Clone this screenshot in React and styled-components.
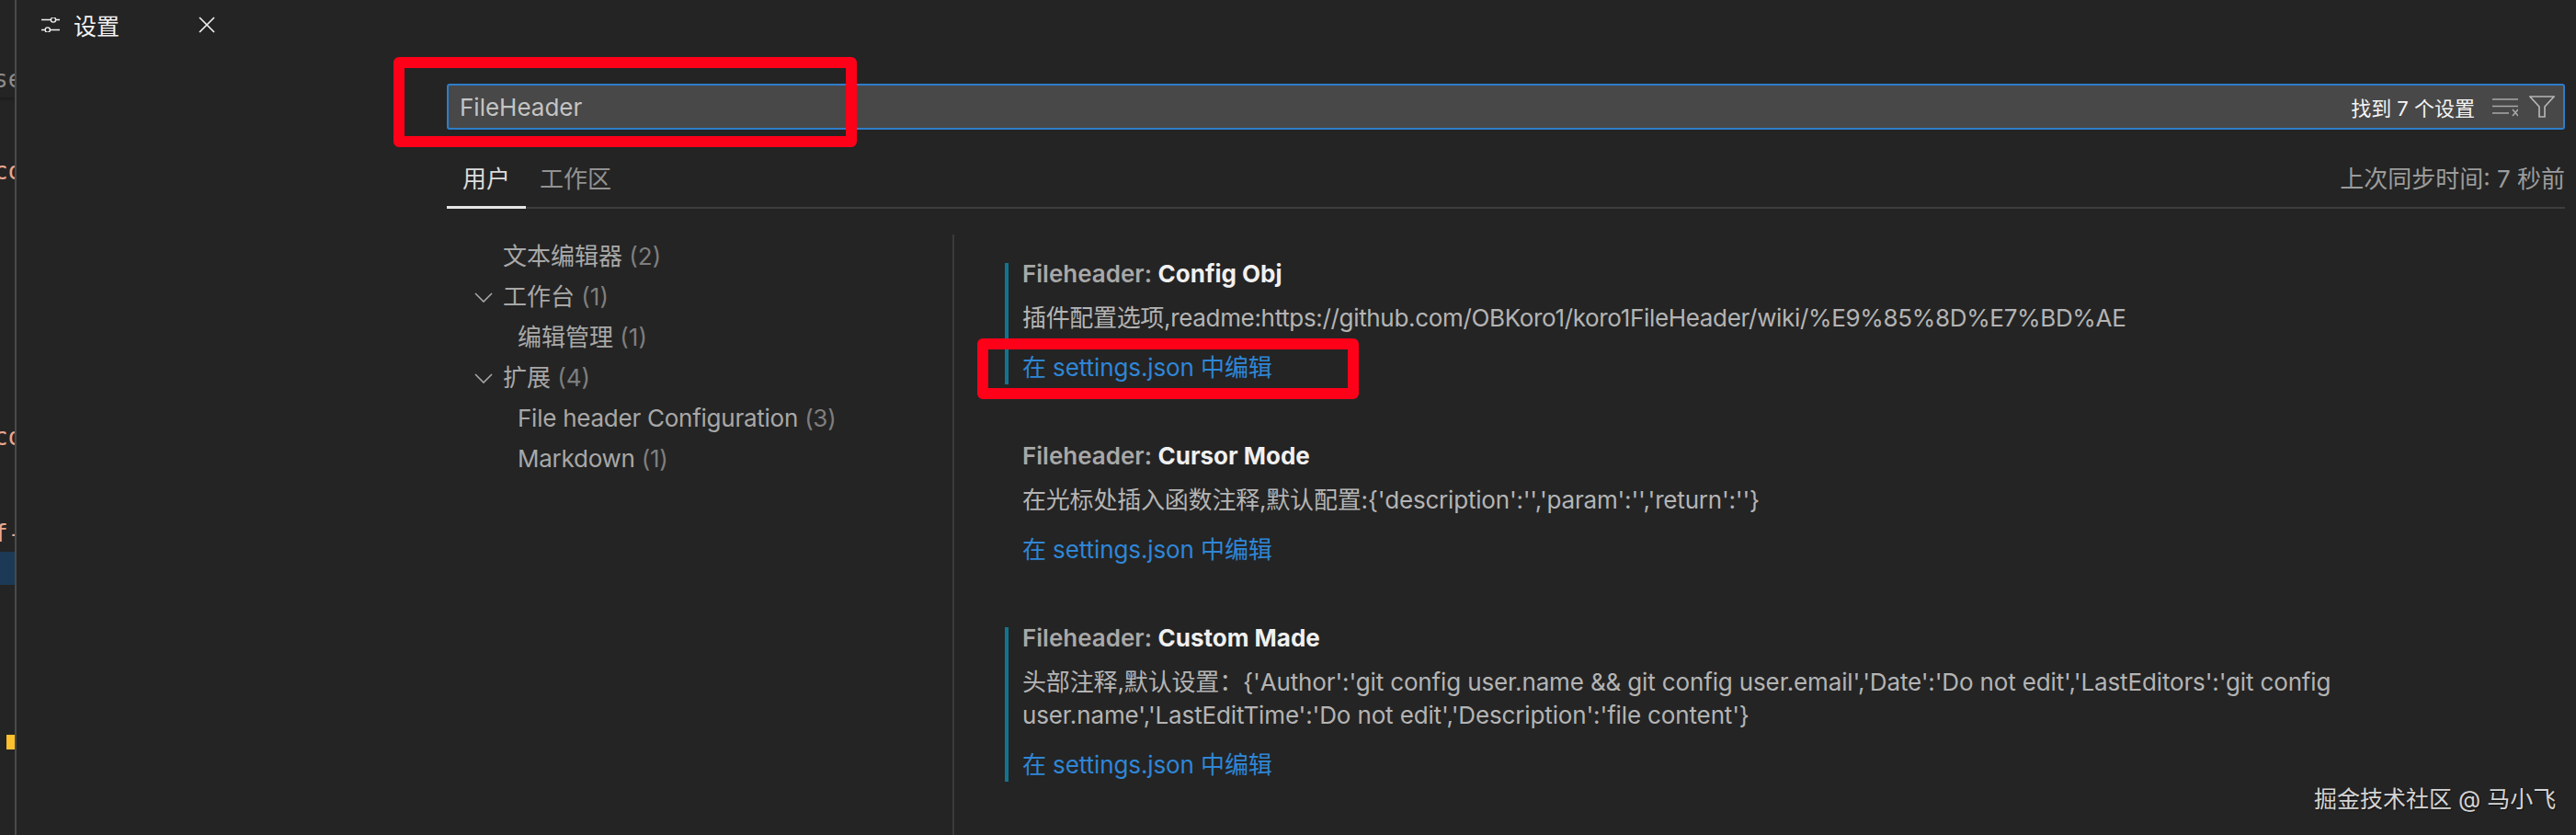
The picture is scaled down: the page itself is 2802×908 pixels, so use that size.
import React from 'react'
import styled, { createGlobalStyle } from 'styled-components'

const sans = `Inter, "Noto Sans CJK SC", sans-serif`

const codeLines = [
  { height: 106, text: 'se', color: '#8c8c8c', rule: true },
  { height: 100, text: 'co', color: '#eaa78e' },
  { height: 289, text: 'co', color: '#eaa78e' },
  { height: 105, text: 'f-', color: '#eaa78e' },
]

const tree = [
  { label: '文本编辑器', count: 2, level: 1 },
  { label: '工作台', count: 1, level: 1, open: true },
  { label: '编辑管理', count: 1, level: 2 },
  { label: '扩展', count: 4, level: 1, open: true },
  { label: 'File header Configuration', count: 3, level: 2, latin: true },
  { label: 'Markdown', count: 1, level: 2, latin: true },
]

const settings = [
  {
    name: 'Config Obj',
    modified: true,
    tracking: -0.33,
    description: '插件配置选项,readme:https://github.com/OBKoro1/koro1FileHeader/wiki/%E9%85%8D%E7%BD%AE',
  },
  {
    name: 'Cursor Mode',
    tracking: -0.2,
    description: "在光标处插入函数注释,默认配置:{'description':'','param':'','return':''}",
  },
  {
    name: 'Custom Made',
    modified: true,
    tracking: -0.14,
    description:
      "头部注释,默认设置：{'Author':'git config user.name && git config user.email','Date':'Do not edit','LastEditors':'git config user.name','LastEditTime':'Do not edit','Description':'file content'}",
  },
]

const App = () => {
  return (
    <Page>
      <GlobalStyle />
      <CodeStrip>
        {codeLines.map((line, i) => (
          <CodeLine key={i} $height={line.height} $color={line.color} $rule={line.rule}>
            {line.text}
          </CodeLine>
        ))}
        <Selection />
        <Marker />
      </CodeStrip>
      <Main>
        <TabHeader>
          <svg width="20" height="16" viewBox="0 0 20 16" fill="none" stroke="#f0f0f0" strokeWidth="1.4">
            <path d="M0 2.5h10.5M16 2.5h4M0 13.5h4M9.5 13.5H20" />
            <circle cx="13" cy="2.5" r="2.6" />
            <circle cx="6.8" cy="13.5" r="2.6" />
          </svg>
          <TabTitle>设置</TabTitle>
          <svg width="18" height="18" viewBox="0 0 18 18" fill="none" stroke="#f0f0f0" strokeWidth="1.7">
            <path d="M1 1l16 16M17 1L1 17" />
          </svg>
        </TabHeader>
        <Body>
          <SearchBox>
            <SearchText>FileHeader</SearchText>
            <ResultCount>找到 7 个设置</ResultCount>
            <SearchAction width="28" height="22" viewBox="0 0 28 22" fill="none" stroke="#a8a8a8" strokeWidth="1.6">
              <path d="M0 3h28M0 10.5h28M0 18h18M22 14l6 7M28 14l-6 7" />
            </SearchAction>
            <SearchAction width="28" height="24" viewBox="0 0 28 24" fill="none" stroke="#b4b4b4" strokeWidth="1.7">
              <path d="M1 1h26L17 12v11h-6V12z" />
            </SearchAction>
          </SearchBox>
          <TabBar>
            <ScopeTab $active>用户</ScopeTab>
            <ScopeTab>工作区</ScopeTab>
            <SyncNote>上次同步时间: 7 秒前</SyncNote>
          </TabBar>
          <Columns>
            <Tree>
              {tree.map((item) => (
                <TreeRow key={item.label} $level={item.level} $latin={item.latin}>
                  {item.open && (
                    <Chevron width="20" height="11" viewBox="0 0 20 11" fill="none" stroke="#a8a8a8" strokeWidth="1.6">
                      <path d="M1 1l9 9 9-9" />
                    </Chevron>
                  )}
                  {item.label} <Count>({item.count})</Count>
                </TreeRow>
              ))}
            </Tree>
            <SettingsList>
              {settings.map((setting) => (
                <Setting key={setting.name} $modified={setting.modified}>
                  <SettingTitle>
                    Fileheader: <strong>{setting.name}</strong>
                  </SettingTitle>
                  <SettingDescription $tracking={setting.tracking}>{setting.description}</SettingDescription>
                  <EditLink>在 settings.json 中编辑</EditLink>
                </Setting>
              ))}
            </SettingsList>
          </Columns>
        </Body>
      </Main>
      <SearchHighlight />
      <LinkHighlight />
      <Watermark>掘金技术社区 @ 马小飞</Watermark>
    </Page>
  )
}

export default App

const GlobalStyle = createGlobalStyle`
  html, body {
    margin: 0;
    background: #242424;
    overflow: hidden;
  }
`

const Page = styled.div`
  position: relative;
  display: flex;
  width: 2802px;
  height: 908px;
  overflow: hidden;
  background: #242424;
  font-family: ${sans};
  font-size: 26px;
`

const CodeStrip = styled.div`
  position: relative;
  width: 16px;
  flex-shrink: 0;
  overflow: hidden;
  border-right: 2px solid #4a4a4a;
`

const CodeLine = styled.div`
  height: ${(p) => p.$height}px;
  display: flex;
  align-items: flex-end;
  margin-left: -7px;
  white-space: nowrap;
  font-family: "DejaVu Sans Mono", monospace;
  font-size: 26px;
  line-height: 40px;
  color: ${(p) => p.$color};
  box-shadow: ${(p) => (p.$rule ? '0 2px 3px #1c1c1c' : 'none')};
`

const Selection = styled.div`
  position: absolute;
  top: 600px;
  left: 0;
  width: 16px;
  height: 36px;
  background: #1c3a56;
`

const Marker = styled.div`
  position: absolute;
  top: 799px;
  left: 7px;
  width: 9px;
  height: 16px;
  background: #fdc02f;
`

const Main = styled.div`
  flex: 1;
  min-width: 0;
  display: flex;
  flex-direction: column;
`

const TabHeader = styled.div`
  height: 54px;
  flex-shrink: 0;
  display: flex;
  align-items: center;
  padding-left: 27px;
`

const TabTitle = styled.div`
  width: 136px;
  margin-left: 15px;
  font-size: 25px;
  color: #f2f2f2;
`

const Body = styled.div`
  flex: 1;
  min-height: 0;
  display: flex;
  flex-direction: column;
  padding: 37px 12px 0 468px;
`

const SearchBox = styled.div`
  box-sizing: border-box;
  height: 50px;
  flex-shrink: 0;
  display: flex;
  align-items: center;
  padding: 0 9px 0 12px;
  background: #484848;
  border: 2px solid #2e7dc9;
  border-radius: 3px;
`

const SearchText = styled.div`
  flex: 1;
  color: #c4c4c4;
`

const ResultCount = styled.div`
  margin-right: 7px;
  font-size: 22px;
  color: #f4f4f4;
`

const SearchAction = styled.svg`
  margin-left: 12px;
  flex-shrink: 0;
`

const TabBar = styled.div`
  height: 86px;
  flex-shrink: 0;
  box-sizing: border-box;
  display: flex;
  align-items: flex-end;
  border-bottom: 2px solid #3e3e3e;
`

const ScopeTab = styled.div`
  box-sizing: border-box;
  height: 54px;
  padding: 0 ${(p) => (p.$active ? 17 : 15)}px;
  line-height: 44px;
  color: ${(p) => (p.$active ? '#dcdcdc' : '#929292')};
  border-bottom: 3px solid ${(p) => (p.$active ? '#e6e6e6' : 'transparent')};
  margin-bottom: -2px;
`

const SyncNote = styled.div`
  margin-left: auto;
  height: 52px;
  line-height: 44px;
  color: #9c9c9c;
`

const Columns = styled.div`
  flex: 1;
  min-height: 0;
  display: flex;
  margin-top: 28px;
`

const Tree = styled.div`
  width: 550px;
  flex-shrink: 0;
  padding-top: 2px;
  color: #a8a8a8;
`

const TreeRow = styled.div`
  position: relative;
  height: 44px;
  line-height: 44px;
  padding-left: ${(p) => (p.$level === 1 ? 61 : 77)}px;
  letter-spacing: ${(p) => (p.$latin ? '-0.25px' : '0')};
  white-space: nowrap;
`

const Chevron = styled.svg`
  position: absolute;
  left: 30px;
  top: 17px;
`

const Count = styled.span`
  color: #7e7e7e;
`

const SettingsList = styled.div`
  flex: 1;
  min-width: 0;
  padding: 31px 0 0 55px;
  border-left: 2px solid #3a3a3a;
`

const Setting = styled.div`
  margin-bottom: 66px;
  padding-left: 15px;
  border-left: 4px solid ${(p) => (p.$modified ? '#12758f' : 'transparent')};
`

const SettingTitle = styled.div`
  height: 24px;
  line-height: 24px;
  font-weight: 600;
  color: #a8a8a8;
  & > strong {
    font-weight: 700;
    color: #f0f0f0;
  }
`

const SettingDescription = styled.div`
  max-width: 1440px;
  margin-top: 18px;
  line-height: 36px;
  letter-spacing: ${(p) => p.$tracking}px;
  color: #b4b4b4;
`

const EditLink = styled.div`
  margin-top: 18px;
  line-height: 36px;
  letter-spacing: -0.1px;
  color: #2f86d6;
`

const SearchHighlight = styled.div`
  position: absolute;
  top: 62px;
  left: 428px;
  width: 504px;
  height: 98px;
  box-sizing: border-box;
  border: 12px solid #ff0019;
  border-radius: 6px;
`

const LinkHighlight = styled.div`
  position: absolute;
  top: 368px;
  left: 1063px;
  width: 415px;
  height: 66px;
  box-sizing: border-box;
  border: 12px solid #ff0019;
  border-radius: 6px;
`

const Watermark = styled.div`
  position: absolute;
  top: 852px;
  left: 2517px;
  font-size: 25px;
  line-height: 34px;
  white-space: nowrap;
  color: #d4d4d4;
  text-shadow: 1px 1px 1px #111;
`
